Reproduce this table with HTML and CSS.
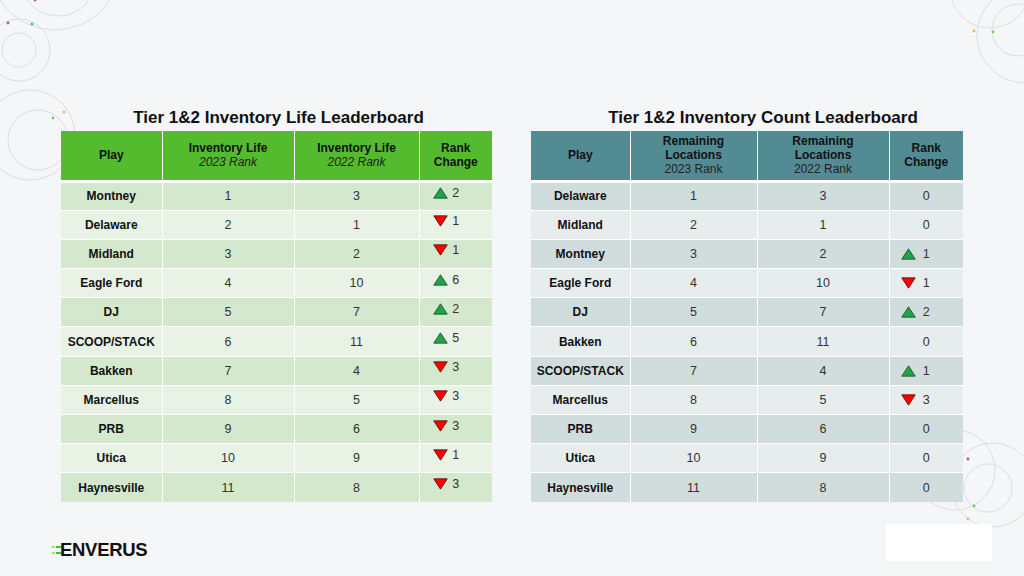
FILE: index.html
```html
<!DOCTYPE html>
<html>
<head>
<meta charset="utf-8">
<link rel="stylesheet" href="styles.css">
</head>
<body>
<div class="slide">
  <svg class="deco" width="1024" height="576" viewBox="0 0 1024 576">
    <g fill="none" stroke="#dcdde0" stroke-width="1">
      <circle cx="19" cy="50" r="17"/>
      <circle cx="19" cy="50" r="31"/>
      <circle cx="58" cy="-22" r="38"/>
      <circle cx="55" cy="-35" r="65"/>
      <circle cx="38" cy="140" r="30"/>
      <circle cx="30" cy="135" r="45"/>
      <circle cx="1018" cy="30" r="26"/>
      <circle cx="1025" cy="35" r="48"/>
      <circle cx="990" cy="-12" r="40"/>
      <circle cx="988" cy="488" r="24"/>
      <circle cx="993" cy="485" r="42"/>
      <circle cx="955" cy="470" r="40"/>
    </g>
    <g>
      <circle cx="8" cy="23" r="1.4" fill="#c040c8"/>
      <circle cx="32" cy="24" r="1.4" fill="#30b8e0"/>
      <circle cx="35" cy="0" r="1.4" fill="#c040c8"/>
      <circle cx="64" cy="112" r="1.4" fill="#f5b060"/>
      <circle cx="53" cy="118" r="1.4" fill="#6ad050"/>
      <circle cx="974" cy="31" r="1.4" fill="#f5b060"/>
      <circle cx="993" cy="32" r="1.4" fill="#6ad050"/>
      <circle cx="968" cy="459" r="1.4" fill="#c040c8"/>
      <circle cx="974" cy="506" r="1.4" fill="#6ad050"/>
      <circle cx="968" cy="519" r="1.4" fill="#f5b060"/>
    </g>
  </svg>

  <div class="boards">
    <section class="board board-life">
      <h2 class="title">Tier 1&amp;2 Inventory Life Leaderboard</h2>
      <table class="lb lb-green">
        <colgroup><col style="width:101px"><col style="width:132px"><col style="width:125px"><col style="width:73px"></colgroup>
        <thead>
          <tr>
            <th>Play</th>
            <th>Inventory Life<br><span class="sub-i">2023 Rank</span></th>
            <th>Inventory Life<br><span class="sub-i">2022 Rank</span></th>
            <th>Rank<br>Change</th>
          </tr>
        </thead>
        <tbody>
          <tr><td class="play">Montney</td><td>1</td><td>3</td><td class="rc raised"><span class="rcg"><svg class="tri" viewBox="0 0 14 11"><polygon points="7,0.7 13.3,10.3 0.7,10.3" class="up"/></svg><span>2</span><span></span></span></td></tr>
          <tr><td class="play">Delaware</td><td>2</td><td>1</td><td class="rc raised"><span class="rcg"><svg class="tri" viewBox="0 0 14 11"><polygon points="0.7,0.7 13.3,0.7 7,10.3" class="down"/></svg><span>1</span><span></span></span></td></tr>
          <tr><td class="play">Midland</td><td>3</td><td>2</td><td class="rc raised"><span class="rcg"><svg class="tri" viewBox="0 0 14 11"><polygon points="0.7,0.7 13.3,0.7 7,10.3" class="down"/></svg><span>1</span><span></span></span></td></tr>
          <tr><td class="play">Eagle Ford</td><td>4</td><td>10</td><td class="rc raised"><span class="rcg"><svg class="tri" viewBox="0 0 14 11"><polygon points="7,0.7 13.3,10.3 0.7,10.3" class="up"/></svg><span>6</span><span></span></span></td></tr>
          <tr><td class="play">DJ</td><td>5</td><td>7</td><td class="rc raised"><span class="rcg"><svg class="tri" viewBox="0 0 14 11"><polygon points="7,0.7 13.3,10.3 0.7,10.3" class="up"/></svg><span>2</span><span></span></span></td></tr>
          <tr><td class="play">SCOOP/STACK</td><td>6</td><td>11</td><td class="rc raised"><span class="rcg"><svg class="tri" viewBox="0 0 14 11"><polygon points="7,0.7 13.3,10.3 0.7,10.3" class="up"/></svg><span>5</span><span></span></span></td></tr>
          <tr><td class="play">Bakken</td><td>7</td><td>4</td><td class="rc raised"><span class="rcg"><svg class="tri" viewBox="0 0 14 11"><polygon points="0.7,0.7 13.3,0.7 7,10.3" class="down"/></svg><span>3</span><span></span></span></td></tr>
          <tr><td class="play">Marcellus</td><td>8</td><td>5</td><td class="rc raised"><span class="rcg"><svg class="tri" viewBox="0 0 14 11"><polygon points="0.7,0.7 13.3,0.7 7,10.3" class="down"/></svg><span>3</span><span></span></span></td></tr>
          <tr><td class="play">PRB</td><td>9</td><td>6</td><td class="rc raised"><span class="rcg"><svg class="tri" viewBox="0 0 14 11"><polygon points="0.7,0.7 13.3,0.7 7,10.3" class="down"/></svg><span>3</span><span></span></span></td></tr>
          <tr><td class="play">Utica</td><td>10</td><td>9</td><td class="rc raised"><span class="rcg"><svg class="tri" viewBox="0 0 14 11"><polygon points="0.7,0.7 13.3,0.7 7,10.3" class="down"/></svg><span>1</span><span></span></span></td></tr>
          <tr><td class="play">Haynesville</td><td>11</td><td>8</td><td class="rc raised"><span class="rcg"><svg class="tri" viewBox="0 0 14 11"><polygon points="0.7,0.7 13.3,0.7 7,10.3" class="down"/></svg><span>3</span><span></span></span></td></tr>
        </tbody>
      </table>
    </section>

    <section class="board board-count">
      <h2 class="title">Tier 1&amp;2 Inventory Count Leaderboard</h2>
      <table class="lb lb-teal">
        <colgroup><col style="width:99px"><col style="width:127px"><col style="width:132px"><col style="width:74px"></colgroup>
        <thead>
          <tr>
            <th>Play</th>
            <th>Remaining<br>Locations<br><span class="sub">2023 Rank</span></th>
            <th>Remaining<br>Locations<br><span class="sub">2022 Rank</span></th>
            <th>Rank<br>Change</th>
          </tr>
        </thead>
        <tbody>
          <tr><td class="play">Delaware</td><td>1</td><td>3</td><td class="rc">0</td></tr>
          <tr><td class="play">Midland</td><td>2</td><td>1</td><td class="rc">0</td></tr>
          <tr><td class="play">Montney</td><td>3</td><td>2</td><td class="rc"><span class="rcg"><svg class="tri" viewBox="0 0 14 11"><polygon points="7,0.7 13.3,10.3 0.7,10.3" class="up"/></svg><span>1</span><span></span></span></td></tr>
          <tr><td class="play">Eagle Ford</td><td>4</td><td>10</td><td class="rc"><span class="rcg"><svg class="tri" viewBox="0 0 14 11"><polygon points="0.7,0.7 13.3,0.7 7,10.3" class="down"/></svg><span>1</span><span></span></span></td></tr>
          <tr><td class="play">DJ</td><td>5</td><td>7</td><td class="rc"><span class="rcg"><svg class="tri" viewBox="0 0 14 11"><polygon points="7,0.7 13.3,10.3 0.7,10.3" class="up"/></svg><span>2</span><span></span></span></td></tr>
          <tr><td class="play">Bakken</td><td>6</td><td>11</td><td class="rc">0</td></tr>
          <tr><td class="play">SCOOP/STACK</td><td>7</td><td>4</td><td class="rc"><span class="rcg"><svg class="tri" viewBox="0 0 14 11"><polygon points="7,0.7 13.3,10.3 0.7,10.3" class="up"/></svg><span>1</span><span></span></span></td></tr>
          <tr><td class="play">Marcellus</td><td>8</td><td>5</td><td class="rc"><span class="rcg"><svg class="tri" viewBox="0 0 14 11"><polygon points="0.7,0.7 13.3,0.7 7,10.3" class="down"/></svg><span>3</span><span></span></span></td></tr>
          <tr><td class="play">PRB</td><td>9</td><td>6</td><td class="rc">0</td></tr>
          <tr><td class="play">Utica</td><td>10</td><td>9</td><td class="rc">0</td></tr>
          <tr><td class="play">Haynesville</td><td>11</td><td>8</td><td class="rc">0</td></tr>
        </tbody>
      </table>
    </section>
  </div>

  <footer class="foot">
    <div class="logo">
      <svg class="logo-mark" width="9" height="12" viewBox="0 0 9 12">
        <rect x="0" y="2" width="3" height="2" fill="#9edc7a"/>
        <rect x="4" y="2" width="5" height="2" fill="#3fbf3a"/>
        <rect x="0" y="8" width="3" height="2" fill="#9edc7a"/>
        <rect x="4" y="8" width="5" height="2" fill="#3fbf3a"/>
      </svg>
      <span class="logo-text">ENVERUS</span>
    </div>
    <div class="note-box"></div>
  </footer>
</div>
</body>
</html>
```

FILE: styles.css
```css
* { box-sizing: border-box; }

html, body {
  margin: 0;
  padding: 0;
}

body {
  background: #f5f6f8;
  font-family: "Liberation Sans", Arial, sans-serif;
  color: #111;
}

.slide {
  position: relative;
  width: 1024px;
  height: 576px;
  overflow: hidden;
}

.deco {
  position: absolute;
  left: 0;
  top: 0;
  pointer-events: none;
}

.boards {
  position: relative;
  display: flex;
  gap: 39px;
  padding: 108px 0 0 61px;
}

.board {
  display: flex;
  flex-direction: column;
  align-items: center;
}

.board-life { width: 431px; }
.board-count { width: 432px; }

.title {
  margin: 0 0 3px 0;
  font-size: 17px;
  font-weight: bold;
  line-height: 20px;
  color: #111;
  white-space: nowrap;
}

.board-life .title { padding-left: 4px; }
.board-count .title { padding-left: 32px; }

.lb {
  border-collapse: collapse;
  table-layout: fixed;
  width: 100%;
  font-size: 12px;
}

.lb th,
.lb td {
  border: 1px solid #ffffff;
  text-align: center;
  padding: 0;
}

.lb th {
  height: 50px;
  font-weight: bold;
  font-size: 12px;
  line-height: 14px;
  color: #111;
  border-bottom: 3px solid #ffffff;
  vertical-align: middle;
}

.lb td {
  height: 29.2px;
  color: #333;
  font-size: 12.5px;
  vertical-align: middle;
}

.lb td.play {
  font-weight: bold;
  color: #111;
  font-size: 12px;
}

.lb-green th { background: #54ba2e; }
.lb-green tbody tr:nth-child(odd) td { background: #d3e8cd; }
.lb-green tbody tr:nth-child(even) td { background: #e8f3e5; }

.lb-teal th { background: #528b93; }
.lb-teal tbody tr:nth-child(odd) td { background: #d1dddd; }
.lb-teal tbody tr:nth-child(even) td { background: #e7eded; }

.lb tr > :first-child { border-left: none; }
.lb tr > :last-child { border-right: none; }
.lb thead th { border-top: none; }
.lb tbody tr:last-child td { border-bottom: none; }

.sub-i {
  font-weight: normal;
  font-style: italic;
  color: #222;
}

.sub {
  font-weight: normal;
  color: #222;
}

.rcg {
  display: grid;
  grid-template-columns: 1fr auto 1fr;
  align-items: center;
}

.rcg .tri {
  justify-self: start;
  margin-left: 13px;
  width: 15px;
  height: 12px;
}

.lb-teal .rcg .tri { margin-left: 11px; }

.rc.raised { padding-bottom: 7px; }
.rc.raised .rcg { align-items: start; }
.rc.raised .rcg .tri { margin-top: 1px; }

.tri .up {
  fill: #1fa447;
  stroke: #1f4d2a;
  stroke-width: 0.8;
}

.tri .down {
  fill: #ff0000;
  stroke: #5a1010;
  stroke-width: 0.8;
}

.foot {
  position: relative;
  display: flex;
  justify-content: space-between;
  align-items: flex-start;
  padding: 22px 32px 0 52px;
}

.logo {
  display: flex;
  align-items: center;
  gap: 0;
  margin-top: 17px;
}

.logo-mark {
  margin-right: -1px;
}

.logo-text {
  font-family: "Liberation Sans", Arial, sans-serif;
  font-weight: bold;
  font-size: 18.5px;
  letter-spacing: -0.3px;
  line-height: 18px;
  color: #111;
}

.note-box {
  width: 106px;
  height: 37px;
  background: #ffffff;
}
```
